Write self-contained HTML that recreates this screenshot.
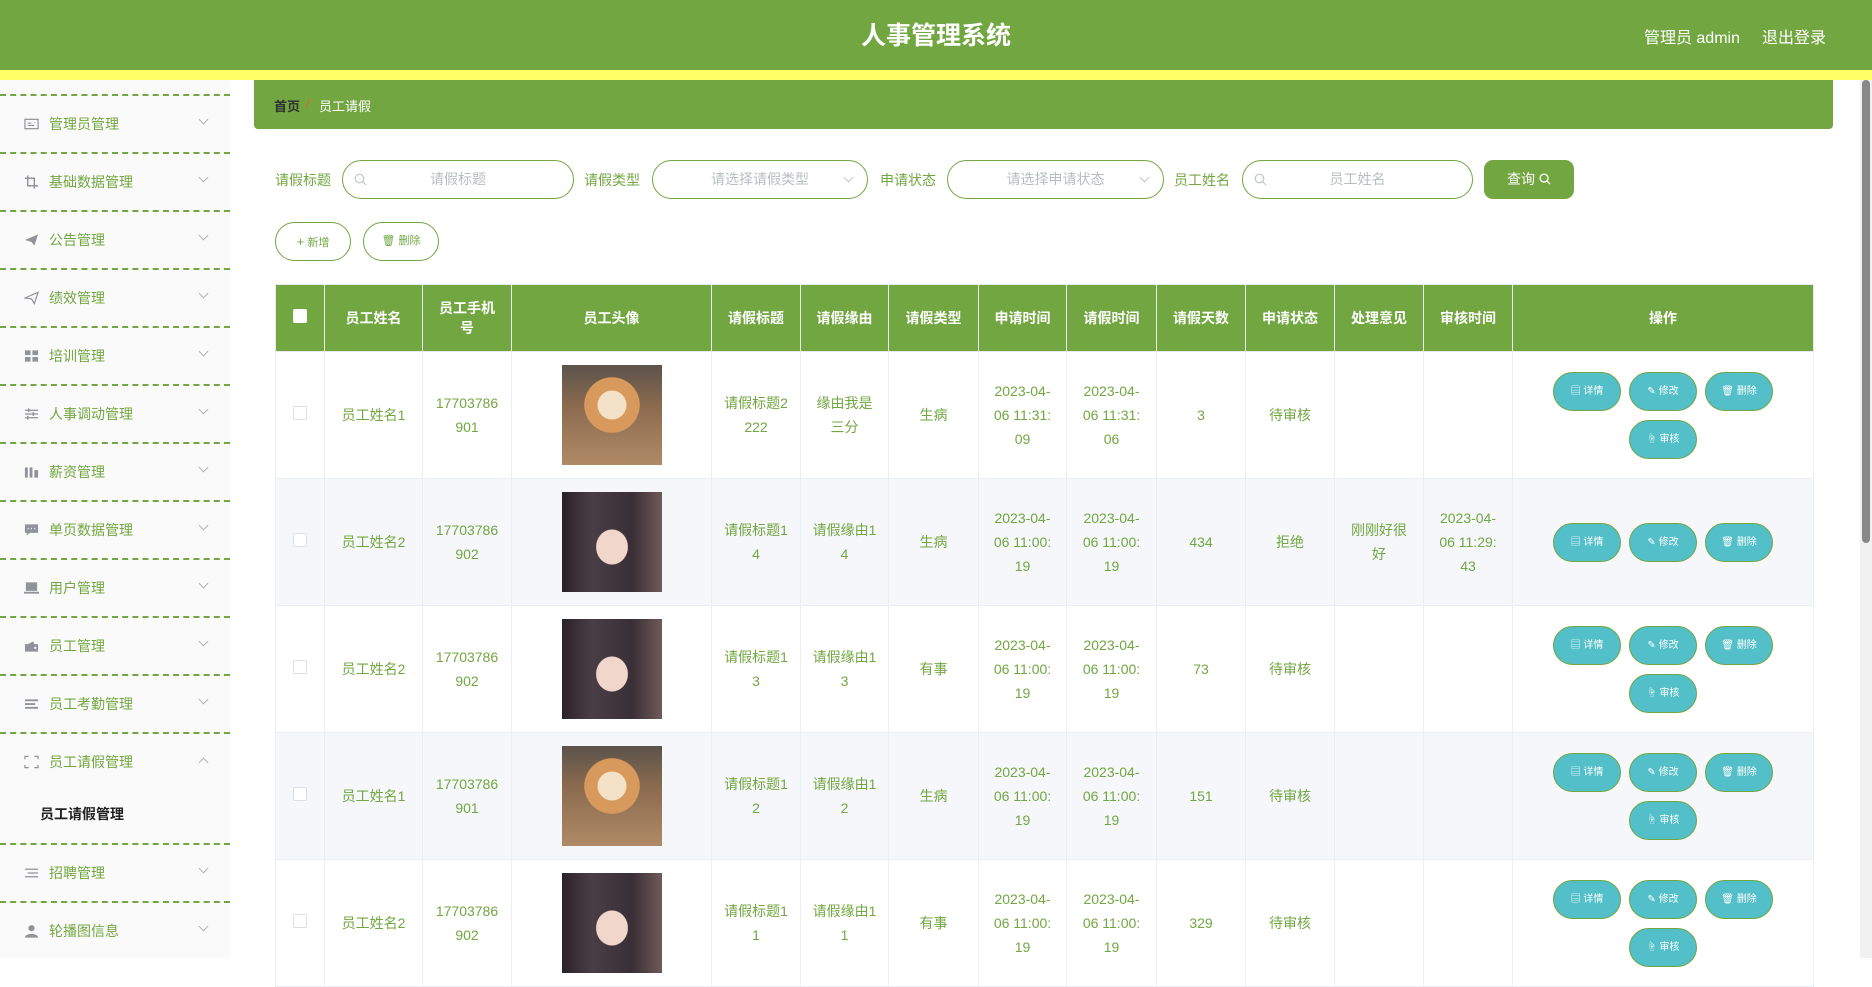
<!DOCTYPE html>
<html><head><meta charset="utf-8">
<style>
*{box-sizing:border-box;margin:0;padding:0}
body{width:1872px;height:958px;overflow:hidden;background:#fff;font-family:"Liberation Sans","Noto Sans CJK SC",sans-serif;font-size:14px;position:relative}
.top{position:absolute;left:0;top:0;width:1872px;height:70px;background:#72a641}
.top h1{position:absolute;left:0;width:1872px;top:20px;text-align:center;color:#fff;font-size:25px;font-weight:bold;line-height:32px}
.top .r{position:absolute;right:46px;top:24px;color:#fff;font-size:16px}
.top .r span{margin-left:22px}
.yel{position:absolute;left:0;top:70px;width:1872px;height:10px;background:#ffff66}
.side{position:absolute;left:0;top:80px;width:230px;height:878px;background:#fafafa}
.it{position:absolute;left:0;width:230px;height:58px;border-top:2px dashed #72a641;color:#72a641;font-size:14px}
.it .t{position:absolute;left:49px;top:18px}
.it .ic{position:absolute;left:24px;top:21px;width:15px;height:14px;color:#909399}
.it .ch{position:absolute;left:200px;top:20px;width:7px;height:7px;border-right:1px solid #b0b3b8;border-bottom:1px solid #b0b3b8;transform:rotate(45deg)}
.it .ch.up{transform:rotate(-135deg);top:25px}
.sub{position:absolute;left:40px;top:724px;font-weight:bold;color:#222;font-size:14px}
.bc{position:absolute;left:254px;top:80px;width:1579px;height:49px;background:#72a641;border-radius:0 0 4px 4px}
.bc span{position:absolute;top:16px;font-size:13px}
.lbl{position:absolute;top:170px;color:#72a641;font-size:14px}
.inp{position:absolute;top:160px;height:39px;border:1px solid #72a641;border-radius:20px;color:#b8bcc4;font-size:14px;text-align:center;line-height:37px}
.btn{position:absolute;top:222px;height:39px;border:1px solid #72a641;border-radius:20px;color:#72a641;font-size:11px;text-align:center;line-height:37px}
.q{position:absolute;left:1484px;top:160px;width:90px;height:39px;background:#72a641;border-radius:9px;color:#fff;font-size:14px;text-align:center;line-height:39px}
table{position:absolute;left:275px;top:284px;border-collapse:collapse;table-layout:fixed;width:1538px}
th{background:#72a641;color:#fff;font-weight:bold;font-size:14px;height:67px;border:1px solid #e8eaf0;padding:0 4px;line-height:20px}
td{height:127px;border:1px solid #ebeef5;text-align:center;color:#72a641;font-size:14px;line-height:24px;padding:0 2px;white-space:nowrap}
tr.a td{background:#f5f7fa}
.cb{display:inline-block;width:14px;height:14px;border:1px solid #dcdfe6;background:#fff;border-radius:2px}
th .cb{border-color:#fff}
.ops{display:flex;flex-wrap:wrap;justify-content:center;gap:9px 8px;width:240px;margin:0 auto}
.ob{width:68px;height:39px;border-radius:20px;background:#52bfc9;border:1px solid #72a641;color:#fff;font-size:10px;line-height:37px}
.dog{width:100px;height:100px;margin:0 auto;background:radial-gradient(circle at 50% 40%,#f3e2c8 0 18%,#d89a5c 19% 35%,transparent 36%),linear-gradient(#5b534b,#8a6a4e 40%,#b08a66)}
.girl{width:100px;height:100px;margin:0 auto;background:radial-gradient(ellipse at 50% 55%,#f1d6cb 0 22%,transparent 23%),linear-gradient(90deg,#2a2228,#4a3e46 30%,#3a2f36 70%,#6f5a5a)}
.sb{position:absolute;left:1860px;top:80px;width:12px;height:878px;background:#f1f1f1}
.sb i{position:absolute;left:2px;top:0;width:8px;height:463px;background:#888;border-radius:4px}
</style></head><body>
<div class="top"><h1>人事管理系统</h1><div class="r"><span>管理员 admin</span><span>退出登录</span></div></div>
<div class="yel"></div>
<div class="side">
<div class="it" style="top:14px"><svg class="ic" viewBox="0 0 16 14"><rect x="1" y="2" width="14" height="10" fill="none" stroke="#909399" stroke-width="1.3"/><path d="M4 6h4M4 8.5h7M11 5.5h1" stroke="#909399" stroke-width="1.2"/></svg><span class="t">管理员管理</span><i class="ch"></i></div>
<div class="it" style="top:72px"><svg class="ic" viewBox="0 0 16 14"><path d="M4 0v11h11M1 3h10v11" fill="none" stroke="#909399" stroke-width="1.5"/></svg><span class="t">基础数据管理</span><i class="ch"></i></div>
<div class="it" style="top:130px"><svg class="ic" viewBox="0 0 16 14"><path d="M1 7L15 1 11 13 8 9z" fill="#909399"/></svg><span class="t">公告管理</span><i class="ch"></i></div>
<div class="it" style="top:188px"><svg class="ic" viewBox="0 0 16 14"><path d="M1 7L15 1 11 13 8 8z" fill="none" stroke="#909399" stroke-width="1.3"/></svg><span class="t">绩效管理</span><i class="ch"></i></div>
<div class="it" style="top:246px"><svg class="ic" viewBox="0 0 16 14"><path d="M1 1h6v5H1zM9 1h6v5H9zM1 8h6v5H1zM9 8h6v5H9z" fill="#909399"/></svg><span class="t">培训管理</span><i class="ch"></i></div>
<div class="it" style="top:304px"><svg class="ic" viewBox="0 0 16 14"><path d="M1 3h14M1 7h14M1 11h14" stroke="#909399" stroke-width="1.3"/><path d="M5 1v4M10 5v4M4 9v4" stroke="#909399" stroke-width="1.6"/></svg><span class="t">人事调动管理</span><i class="ch"></i></div>
<div class="it" style="top:362px"><svg class="ic" viewBox="0 0 16 14"><path d="M1 2h3v11H1zM6 2h3v11H6zM11 5h4v8h-4z" fill="#909399"/></svg><span class="t">薪资管理</span><i class="ch"></i></div>
<div class="it" style="top:420px"><svg class="ic" viewBox="0 0 16 14"><path d="M1 1h14v9H6l-3 3v-3H1z" fill="#909399"/><path d="M4 5.5h1M7.5 5.5h1M11 5.5h1" stroke="#fff" stroke-width="1.5"/></svg><span class="t">单页数据管理</span><i class="ch"></i></div>
<div class="it" style="top:478px"><svg class="ic" viewBox="0 0 16 14"><path d="M2 1h12v9H2zM0 11h16v2H0z" fill="#909399"/></svg><span class="t">用户管理</span><i class="ch"></i></div>
<div class="it" style="top:536px"><svg class="ic" viewBox="0 0 16 14"><path d="M1 5h14v8H1zM4 5l6-3 1 3" fill="#909399"/><circle cx="12" cy="9" r="1.2" fill="#fff"/></svg><span class="t">员工管理</span><i class="ch"></i></div>
<div class="it" style="top:594px"><svg class="ic" viewBox="0 0 16 14"><path d="M1 3h14M1 7h11M1 11h14" stroke="#909399" stroke-width="2"/></svg><span class="t">员工考勤管理</span><i class="ch"></i></div>
<div class="it" style="top:652px;height:111px"><svg class="ic" viewBox="0 0 16 14"><path d="M1 4V1h4M11 1h4v3M15 10v3h-4M5 13H1v-3" fill="none" stroke="#909399" stroke-width="1.3"/></svg><span class="t">员工请假管理</span><i class="ch up"></i></div>
<div class="sub">员工请假管理</div>
<div class="it" style="top:763px"><svg class="ic" viewBox="0 0 16 14"><path d="M1 3h14M4 7h11M1 11h14" stroke="#909399" stroke-width="1.4"/></svg><span class="t">招聘管理</span><i class="ch"></i></div>
<div class="it" style="top:821px"><svg class="ic" viewBox="0 0 16 14"><circle cx="8" cy="4" r="3.3" fill="#909399"/><path d="M1 14c0-5 14-5 14 0z" fill="#909399"/></svg><span class="t">轮播图信息</span><i class="ch"></i></div>
</div>
<div class="bc"><span style="left:20px;color:#303133;font-weight:bold">首页</span><span style="left:52px;color:#f05a28">/</span><span style="left:65px;color:#fff">员工请假</span></div>

<div class="lbl" style="left:275px">请假标题</div>
<div class="inp" style="left:342px;width:232px">请假标题<svg style="position:absolute;left:11px;top:12px" width="13" height="13" viewBox="0 0 13 13"><circle cx="5.5" cy="5.5" r="4.3" fill="none" stroke="#c0c4cc" stroke-width="1.2"/><path d="M8.7 8.7L12 12" stroke="#c0c4cc" stroke-width="1.2"/></svg></div>
<div class="lbl" style="left:584px">请假类型</div>
<div class="inp" style="left:652px;width:216px">请选择请假类型<i style="position:absolute;right:15px;top:13px;width:7px;height:7px;border-right:1px solid #c0c4cc;border-bottom:1px solid #c0c4cc;transform:rotate(45deg)"></i></div>
<div class="lbl" style="left:880px">申请状态</div>
<div class="inp" style="left:947px;width:217px">请选择申请状态<i style="position:absolute;right:15px;top:13px;width:7px;height:7px;border-right:1px solid #c0c4cc;border-bottom:1px solid #c0c4cc;transform:rotate(45deg)"></i></div>
<div class="lbl" style="left:1174px">员工姓名</div>
<div class="inp" style="left:1242px;width:231px">员工姓名<svg style="position:absolute;left:11px;top:12px" width="13" height="13" viewBox="0 0 13 13"><circle cx="5.5" cy="5.5" r="4.3" fill="none" stroke="#c0c4cc" stroke-width="1.2"/><path d="M8.7 8.7L12 12" stroke="#c0c4cc" stroke-width="1.2"/></svg></div>
<div class="q">查询 <svg width="12" height="12" viewBox="0 0 13 13" style="vertical-align:-1px"><circle cx="5.5" cy="5.5" r="4.3" fill="none" stroke="#fff" stroke-width="1.4"/><path d="M8.7 8.7L12 12" stroke="#fff" stroke-width="1.4"/></svg></div>
<div class="btn" style="left:275px;width:76px"><span style="font-size:13px">+</span> 新增</div>
<div class="btn" style="left:363px;width:76px">🗑︎ 删除</div>

<table>
<colgroup><col style="width:49px"><col style="width:98px"><col style="width:89px"><col style="width:200px"><col style="width:89px"><col style="width:88px"><col style="width:90px"><col style="width:88px"><col style="width:90px"><col style="width:89px"><col style="width:89px"><col style="width:89px"><col style="width:89px"><col style="width:301px"></colgroup>
<tr><th><span class="cb"></span></th><th>员工姓名</th><th>员工手机<br>号</th><th>员工头像</th><th>请假标题</th><th>请假缘由</th><th>请假类型</th><th>申请时间</th><th>请假时间</th><th>请假天数</th><th>申请状态</th><th>处理意见</th><th>审核时间</th><th>操作</th></tr>
<tr><td><span class="cb"></span></td><td>员工姓名1</td><td>17703786<br>901</td><td><div class="dog"></div></td><td>请假标题2<br>222</td><td>缘由我是<br>三分</td><td>生病</td><td>2023-04-<br>06 11:31:<br>09</td><td>2023-04-<br>06 11:31:<br>06</td><td>3</td><td>待审核</td><td></td><td></td><td><div class="ops"><div class="ob">▤ 详情</div><div class="ob">✎ 修改</div><div class="ob">🗑︎ 删除</div><div class="ob">☝ 审核</div></div></td></tr>
<tr class="a"><td><span class="cb"></span></td><td>员工姓名2</td><td>17703786<br>902</td><td><div class="girl"></div></td><td>请假标题1<br>4</td><td>请假缘由1<br>4</td><td>生病</td><td>2023-04-<br>06 11:00:<br>19</td><td>2023-04-<br>06 11:00:<br>19</td><td>434</td><td>拒绝</td><td>刚刚好很<br>好</td><td>2023-04-<br>06 11:29:<br>43</td><td><div class="ops"><div class="ob">▤ 详情</div><div class="ob">✎ 修改</div><div class="ob">🗑︎ 删除</div></div></td></tr>
<tr><td><span class="cb"></span></td><td>员工姓名2</td><td>17703786<br>902</td><td><div class="girl"></div></td><td>请假标题1<br>3</td><td>请假缘由1<br>3</td><td>有事</td><td>2023-04-<br>06 11:00:<br>19</td><td>2023-04-<br>06 11:00:<br>19</td><td>73</td><td>待审核</td><td></td><td></td><td><div class="ops"><div class="ob">▤ 详情</div><div class="ob">✎ 修改</div><div class="ob">🗑︎ 删除</div><div class="ob">☝ 审核</div></div></td></tr>
<tr class="a"><td><span class="cb"></span></td><td>员工姓名1</td><td>17703786<br>901</td><td><div class="dog"></div></td><td>请假标题1<br>2</td><td>请假缘由1<br>2</td><td>生病</td><td>2023-04-<br>06 11:00:<br>19</td><td>2023-04-<br>06 11:00:<br>19</td><td>151</td><td>待审核</td><td></td><td></td><td><div class="ops"><div class="ob">▤ 详情</div><div class="ob">✎ 修改</div><div class="ob">🗑︎ 删除</div><div class="ob">☝ 审核</div></div></td></tr>
<tr><td><span class="cb"></span></td><td>员工姓名2</td><td>17703786<br>902</td><td><div class="girl"></div></td><td>请假标题1<br>1</td><td>请假缘由1<br>1</td><td>有事</td><td>2023-04-<br>06 11:00:<br>19</td><td>2023-04-<br>06 11:00:<br>19</td><td>329</td><td>待审核</td><td></td><td></td><td><div class="ops"><div class="ob">▤ 详情</div><div class="ob">✎ 修改</div><div class="ob">🗑︎ 删除</div><div class="ob">☝ 审核</div></div></td></tr>
</table>
<div class="sb"><i></i></div>
</body></html>
